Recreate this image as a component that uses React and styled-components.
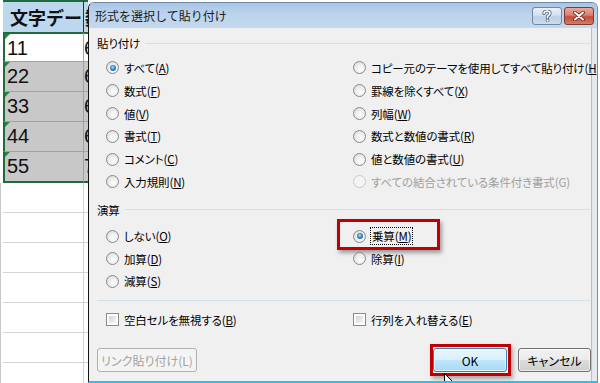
import React from 'react';
import styled, { createGlobalStyle, css } from 'styled-components';

const Global = createGlobalStyle`
  html, body { margin: 0; padding: 0; background: #fff; }
  body { width: 600px; height: 383px; overflow: hidden; }
  #root { width: 600px; height: 383px; }
`;

const GREEN = '#1f6b3e';

const Page = styled.div`
  display: flex;
  width: 600px;
  height: 383px;
  overflow: hidden;
  background: #fff;
`;

/* ---------------- spreadsheet ---------------- */
const Sheet = styled.div`
  width: 88px;
  flex: none;
  height: 383px;
  overflow: hidden;
  display: flex;
  flex-direction: column;
  background: #fff;
`;

const SheetRow = styled.div`
  display: grid;
  grid-template-columns: 3px 80px 5px;
  height: ${p => p.$h}px;
  flex: none;
`;

const Gutter = styled.div`
  border-right: ${p => (p.$line ? '1px solid #c8c8c8' : 'none')};
  margin-right: ${p => (p.$line ? '2px' : '0')};
`;

const HeadCell = styled.div`
  background: #bdd7ee;
  border-top: 2px solid ${GREEN};
  border-left: ${p => (p.$divider ? '1px solid #333' : 'none')};
  font-family: "Noto Sans CJK JP", sans-serif;
  font-weight: 700;
  font-size: 18px;
  line-height: 30px;
  padding-left: ${p => (p.$divider ? '1px' : '7px')};
  white-space: nowrap;
  overflow: hidden;
  color: #111;
`;

const DataCell = styled.div`
  position: relative;
  background: ${p => (p.$shade ? '#c8c8c8' : '#fff')};
  border-left: ${p => p.$left || 'none'};
  border-bottom: ${p => p.$bottom || 'none'};
  border-top: ${p => p.$top || 'none'};
  font-family: "Liberation Sans", Arial, sans-serif;
  font-size: 20px;
  line-height: 28px;
  padding-left: ${p => (p.$first ? '2px' : '0')};
  white-space: nowrap;
  overflow: hidden;
  color: #111;
  box-sizing: border-box;
`;

const ErrorMark = styled.span`
  position: absolute;
  left: 0;
  top: 0;
  width: 0;
  height: 0;
  border-top: 5px solid #1e8a3c;
  border-right: 5px solid transparent;
`;

/* ---------------- dialog ---------------- */
const Dialog = styled.div`
  width: 510px;
  flex: none;
  margin-top: 2px;
  height: 381px;
  box-sizing: border-box;
  display: flex;
  flex-direction: column;
  border-left: 1px solid #151515;
  border-right: 1px solid #7b8ea3;
  border-top: 1px solid #6f88a6;
  border-bottom: 2px solid #2cc0ef;
  border-radius: 6px 6px 0 0;
  background: #e3e9ef;
  overflow: hidden;
  font-family: "Noto Sans CJK JP", sans-serif;
`;

const TitleBar = styled.div`
  height: 25px;
  flex: none;
  display: flex;
  align-items: center;
  padding: 0 3px 0 6px;
  background: linear-gradient(180deg, #a9c5e5 0%, #bcd3ec 45%, #c4d9ef 100%);
`;

const Title = styled.div`
  flex: 1;
  font-size: 12px;
  color: #1a1a1a;
`;

const CaptionButton = styled.div`
  width: 30px;
  height: 18px;
  margin-left: 2px;
  box-sizing: border-box;
  border-radius: 3px;
  display: flex;
  align-items: center;
  justify-content: center;
  ${p =>
    p.$close
      ? css`
          border: 1px solid #7e3b31;
          background: linear-gradient(180deg, #e9a99b 0%, #d8806f 45%, #c54b3a 55%, #d77a66 100%);
        `
      : css`
          border: 1px solid #6d87a5;
          background: linear-gradient(180deg, #e9f0f8 0%, #d4e1f0 45%, #bccfe6 55%, #cddcee 100%);
        `}
`;

const Client = styled.div`
  flex: 1;
  margin-right: 5px;
  background: #f0f0f0;
  border-right: 1px solid #b5c0cb;
  display: flex;
  flex-direction: column;
  padding: 7px 0 9px 0;
  font-size: 11.5px;
  letter-spacing: -0.15px;
  color: #000;
  font-feature-settings: "palt";
`;

const GroupHeader = styled.div`
  display: flex;
  align-items: center;
  height: 16px;
  padding-left: 8px;
  gap: 5px;
  margin-top: ${p => p.$mt || 0}px;
  margin-right: 1px;
`;

const GroupLine = styled.div`
  flex: 1;
  height: 1px;
  background: #d5dfe5;
`;

const OptionGrid = styled.div`
  display: grid;
  grid-template-columns: 247px 1fr;
  grid-auto-rows: ${p => p.$row}px;
  padding-left: 17px;
  margin-top: ${p => p.$mt}px;
`;

const Option = styled.div`
  position: relative;
  display: flex;
  align-items: center;
  gap: 5px;
  color: ${p => (p.$disabled ? '#a0a0a0' : '#000')};
  white-space: nowrap;
`;

const Radio = styled.span`
  position: relative;
  flex: none;
  width: 13px;
  height: 13px;
  box-sizing: border-box;
  border-radius: 50%;
  border: 1px solid ${p => (p.$disabled ? '#cacaca' : '#8a8a8a')};
  background: ${p =>
    p.$disabled
      ? '#f4f4f4'
      : 'radial-gradient(circle at 60% 65%, #ffffff 0%, #eeeeee 45%, #d3d3d3 100%)'};
  ${p =>
    p.$checked &&
    css`
      &::after {
        content: '';
        position: absolute;
        left: 2.5px;
        top: 2.5px;
        width: 6px;
        height: 6px;
        border-radius: 50%;
        background: radial-gradient(circle at 45% 40%, #bfe3fb 0%, #3b8fdc 40%, #104d8e 100%);
      }
    `}
`;

const Check = styled.span`
  flex: none;
  width: 13px;
  height: 13px;
  box-sizing: border-box;
  border: 1px solid #8a8a8a;
  background: #fff;
  padding: 2px;
  &::before {
    content: '';
    display: block;
    width: 100%;
    height: 100%;
    background: linear-gradient(135deg, #d3d3d3 0%, #e8e8e8 60%, #f6f6f6 100%);
  }
`;

const Label = styled.span`
  line-height: 16px;
  ${p =>
    p.$focus &&
    css`
      outline: 1px dotted #000;
      outline-offset: 0px;
      padding: 0 1px;
    `}
`;

const Key = styled.span`
  text-decoration: ${p => (p.$off ? 'none' : 'underline')};
  text-underline-offset: 1px;
`;

const Highlight = styled.div`
  position: absolute;
  left: -16px;
  top: -6px;
  width: 103px;
  height: 31px;
  box-sizing: border-box;
  border: 3px solid #c00000;
  box-shadow: 2px 3px 4px rgba(0, 0, 0, 0.35);
  pointer-events: none;
`;

const Separator = styled.div`
  height: 1px;
  background: #d5dfe5;
  margin: ${p => p.$mt}px 1px 0 8px;
`;

const CheckRow = styled.div`
  display: grid;
  grid-template-columns: 247px 1fr;
  height: 22px;
  padding-left: 17px;
  margin-top: 8px;
`;

const ButtonBar = styled.div`
  display: flex;
  align-items: center;
  margin-top: auto;
  padding: 0 0 0 8px;
  height: 24px;
`;

const Button = styled.div`
  position: relative;
  height: 24px;
  width: ${p => p.$w}px;
  margin-left: ${p => p.$ml || 0}px;
  box-sizing: border-box;
  border-radius: 3px;
  display: flex;
  align-items: center;
  justify-content: center;
  font-size: 12px;
  letter-spacing: 0;
  ${p =>
    p.$variant === 'disabled' &&
    css`
      border: 1px solid #adb2b5;
      background: #f4f4f4;
      color: #a3a3a3;
    `}
  ${p =>
    p.$variant === 'default' &&
    css`
      border: 1px solid #3c7fb1;
      background: linear-gradient(180deg, #eaf6fd 0%, #d9f0fc 50%, #bee6fd 50%, #a7d9f5 100%);
      box-shadow: inset 0 0 0 1px rgba(255, 255, 255, 0.7);
      color: #000;
    `}
  ${p =>
    p.$variant === 'normal' &&
    css`
      border: 1px solid #707070;
      background: linear-gradient(180deg, #f2f2f2 0%, #ebebeb 50%, #dddddd 50%, #cfcfcf 100%);
      box-shadow: inset 0 0 0 1px rgba(255, 255, 255, 0.6);
      color: #000;
    `}
`;

const OkFrame = styled.div`
  position: absolute;
  left: -4px;
  top: -5px;
  right: -5px;
  bottom: -5px;
  border: 3px solid #c00000;
  box-shadow: 2px 3px 4px rgba(0, 0, 0, 0.3);
  pointer-events: none;
`;

const Cursor = styled.svg`
  position: absolute;
  left: 10px;
  top: 24px;
  overflow: visible;
`;

const Spacer = styled.div`
  flex: 1;
`;

const labelWithKey = (text, key, off) => (
  <>
    {text}(<Key $off={off}>{key}</Key>)
  </>
);

const pasteOptions = [
  { t: 'すべて', k: 'A', checked: true },
  { t: 'コピー元のテーマを使用してすべて貼り付け', k: 'H' },
  { t: '数式', k: 'F' },
  { t: '罫線を除くすべて', k: 'X' },
  { t: '値', k: 'V' },
  { t: '列幅', k: 'W' },
  { t: '書式', k: 'T' },
  { t: '数式と数値の書式', k: 'R' },
  { t: 'コメント', k: 'C' },
  { t: '値と数値の書式', k: 'U' },
  { t: '入力規則', k: 'N' },
  { t: 'すべての結合されている条件付き書式', k: 'G', disabled: true },
];

const opOptions = [
  { t: 'しない', k: 'O' },
  { t: '乗算', k: 'M', checked: true, focus: true },
  { t: '加算', k: 'D' },
  { t: '除算', k: 'I' },
  { t: '減算', k: 'S' },
  null,
];

const rows = [
  { a: '11', b: '66', shade: false },
  { a: '22', b: '66', shade: true },
  { a: '33', b: '66', shade: true },
  { a: '44', b: '66', shade: true },
  { a: '55', b: '77', shade: true },
];

function OptionItem({ o }) {
  if (!o) return <div />;
  return (
    <Option $disabled={o.disabled}>
      <Radio $checked={o.checked} $disabled={o.disabled} />
      <Label $focus={o.focus}>{labelWithKey(o.t, o.k, o.disabled)}</Label>
      {o.focus && <Highlight />}
    </Option>
  );
}

export default function App() {
  return (
    <>
      <Global />
      <Page>
        <Sheet>
          <SheetRow $h={32}>
            <Gutter />
            <HeadCell>文字データ</HeadCell>
            <HeadCell $divider>数値</HeadCell>
          </SheetRow>
          {rows.map((r, i) => {
            const last = i === rows.length - 1;
            const first = i === 0;
            const bottom = last ? `2px solid ${GREEN}` : '1px solid #a2a2a2';
            return (
              <SheetRow key={r.a} $h={30 + (last ? 1 : 0)}>
                <Gutter />
                <DataCell
                  $first
                  $shade={r.shade}
                  $left={`2px solid ${GREEN}`}
                  $top={first ? `2px solid ${GREEN}` : 'none'}
                  $bottom={bottom}
                >
                  <ErrorMark />
                  {r.a}
                </DataCell>
                <DataCell
                  $shade={r.shade}
                  $left="1px solid #a2a2a2"
                  $top={first ? `2px solid ${GREEN}` : 'none'}
                  $bottom={bottom}
                >
                  {r.b}
                </DataCell>
              </SheetRow>
            );
          })}
          {Array.from({ length: 7 }).map((_, i) => (
            <SheetRow key={i} $h={30}>
              <Gutter $line />
              <DataCell $bottom="1px solid #d4d4d4" />
              <DataCell $left="1px solid #d4d4d4" $bottom="1px solid #d4d4d4" />
            </SheetRow>
          ))}
        </Sheet>

        <Dialog>
          <TitleBar>
            <Title>形式を選択して貼り付け</Title>
            <CaptionButton>
              <svg width="10" height="12" viewBox="0 0 10 12">
                <path
                  d="M2 3.5 C2 1.5 3.5 1 5 1 C7 1 8 2 8 3.5 C8 5 6 5.5 5.5 6.5 L5.5 8"
                  fill="none"
                  stroke="#4b5f78"
                  strokeWidth="3.2"
                  strokeLinecap="round"
                />
                <path
                  d="M2 3.5 C2 1.5 3.5 1 5 1 C7 1 8 2 8 3.5 C8 5 6 5.5 5.5 6.5 L5.5 8"
                  fill="none"
                  stroke="#fff"
                  strokeWidth="1.6"
                  strokeLinecap="round"
                />
                <circle cx="5.5" cy="10.6" r="1.4" fill="#fff" stroke="#4b5f78" strokeWidth="0.8" />
              </svg>
            </CaptionButton>
            <CaptionButton $close>
              <svg width="14" height="10" viewBox="0 0 14 10">
                <path d="M3 1.5 L11 8.5 M11 1.5 L3 8.5" stroke="#5a1f17" strokeWidth="3.6" strokeLinecap="round" />
                <path d="M3 1.5 L11 8.5 M11 1.5 L3 8.5" stroke="#fff" strokeWidth="2" strokeLinecap="round" />
              </svg>
            </CaptionButton>
          </TitleBar>

          <Client>
            <GroupHeader>
              <span>貼り付け</span>
              <GroupLine />
            </GroupHeader>
            <OptionGrid $row={22.8} $mt={5.6}>
              {pasteOptions.map((o, i) => (
                <OptionItem key={i} o={o} />
              ))}
            </OptionGrid>

            <GroupHeader $mt={8.6}>
              <span>演算</span>
              <GroupLine />
            </GroupHeader>
            <OptionGrid $row={22.5} $mt={7}>
              {opOptions.map((o, i) => (
                <OptionItem key={i} o={o} />
              ))}
            </OptionGrid>

            <Separator $mt={7.5} />

            <CheckRow>
              <Option>
                <Check />
                <Label>{labelWithKey('空白セルを無視する', 'B')}</Label>
              </Option>
              <Option>
                <Check />
                <Label>{labelWithKey('行列を入れ替える', 'E')}</Label>
              </Option>
            </CheckRow>

            <ButtonBar>
              <Button $w={100} $variant="disabled">
                リンク貼り付け(L)
              </Button>
              <Spacer />
              <Button $w={74} $variant="default">
                OK
                <OkFrame />
                <Cursor width="12" height="19" viewBox="0 0 12 19">
                  <path
                    d="M0.5 0.5 L0.5 15 L4 11.5 L6.5 17.5 L8.5 16.5 L6 10.5 L10.5 10.5 Z"
                    fill="#fff"
                    stroke="#000"
                    strokeWidth="1"
                    strokeLinejoin="round"
                  />
                </Cursor>
              </Button>
              <Button $w={73} $ml={11} $variant="normal">
                キャンセル
              </Button>
            </ButtonBar>
          </Client>
        </Dialog>
      </Page>
    </>
  );
}
